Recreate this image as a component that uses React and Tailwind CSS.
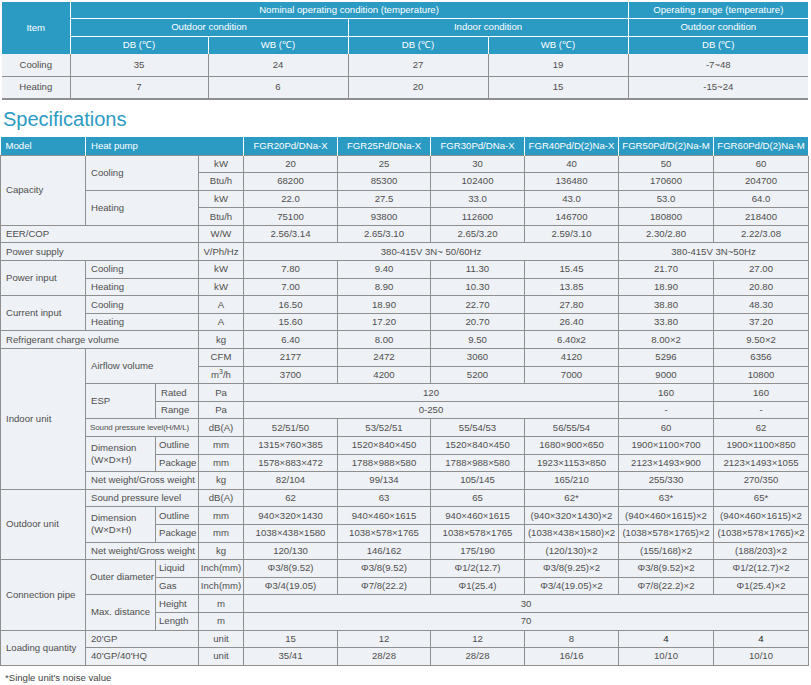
import React from "react";

const Td = ({ children, className = "", ...p }) => (
  <td className={`border border-[#8f8f8f] p-0 whitespace-nowrap ${className}`} {...p}>
    {children}
  </td>
);
const L = ({ children, className = "", ...p }) => (
  <Td className={`text-left pl-[5px] ${className}`} {...p}>
    {children}
  </Td>
);
const C = ({ children, className = "", ...p }) => (
  <Td className={`text-center ${className}`} {...p}>
    {children}
  </Td>
);
const Vals = ({ v }) => v.map((x, i) => <C key={i}>{x}</C>);

const models = [
  "FGR20Pd/DNa-X",
  "FGR25Pd/DNa-X",
  "FGR30Pd/DNa-X",
  "FGR40Pd/D(2)Na-X",
  "FGR50Pd/D(2)Na-M",
  "FGR60Pd/D(2)Na-M",
];

const Row = ({ children }) => <tr className="h-[17.6px]">{children}</tr>;

export default function App() {
  return (
    <div className="w-[811px] h-[685px] bg-white font-['Liberation_Sans',Arial,sans-serif] text-[9.6px] leading-[12px] text-[#4f4f4f] overflow-hidden">
      {/* Top table */}
      <table className="mt-[2px] ml-[2px] w-[806px] table-fixed border-collapse">
        <colgroup>
          <col className="w-[68px]" />
          <col className="w-[138px]" />
          <col className="w-[140px]" />
          <col className="w-[140px]" />
          <col className="w-[140px]" />
          <col className="w-[180px]" />
        </colgroup>
        <thead className="bg-[#2b9bc4] text-white">
          <tr className="h-[16px]">
            <th rowSpan={3} className="font-normal border-r border-white p-0">Item</th>
            <th colSpan={4} className="font-normal border-r border-b border-white p-0">
              Nominal operating condition (temperature)
            </th>
            <th className="font-normal border-b border-white p-0">Operating range (temperature)</th>
          </tr>
          <tr className="h-[18px]">
            <th colSpan={2} className="font-normal border-r border-b border-white p-0">Outdoor condition</th>
            <th colSpan={2} className="font-normal border-r border-b border-white p-0">Indoor condition</th>
            <th className="font-normal border-b border-white p-0">Outdoor condition</th>
          </tr>
          <tr className="h-[18px]">
            <th className="font-normal border-r border-white p-0">DB (℃)</th>
            <th className="font-normal border-r border-white p-0">WB (℃)</th>
            <th className="font-normal border-r border-white p-0">DB (℃)</th>
            <th className="font-normal border-r border-white p-0">WB (℃)</th>
            <th className="font-normal p-0">DB (℃)</th>
          </tr>
        </thead>
        <tbody className="bg-[#eef1f5]">
          <tr className="h-[22px]">
            <td className="text-center border-r border-b border-[#8f8f8f]">Cooling</td>
            <td className="text-center border-r border-b border-[#8f8f8f]">35</td>
            <td className="text-center border-r border-b border-[#8f8f8f]">24</td>
            <td className="text-center border-r border-b border-[#8f8f8f]">27</td>
            <td className="text-center border-r border-b border-[#8f8f8f]">19</td>
            <td className="text-center border-b border-[#8f8f8f]">-7~48</td>
          </tr>
          <tr className="h-[23px]">
            <td className="text-center border-r border-b-2 border-[#8f8f8f]">Heating</td>
            <td className="text-center border-r border-b-2 border-[#8f8f8f]">7</td>
            <td className="text-center border-r border-b-2 border-[#8f8f8f]">6</td>
            <td className="text-center border-r border-b-2 border-[#8f8f8f]">20</td>
            <td className="text-center border-r border-b-2 border-[#8f8f8f]">15</td>
            <td className="text-center border-b-2 border-[#8f8f8f]">-15~24</td>
          </tr>
        </tbody>
      </table>

      <div className="h-[37px] flex items-center pl-[3px] text-[20px] text-[#2b9bc4] leading-none">
        Specifications
      </div>

      {/* Spec table */}
      <table className="w-[808px] table-fixed border-collapse">
        <colgroup>
          <col className="w-[85px]" />
          <col className="w-[70px]" />
          <col className="w-[43px]" />
          <col className="w-[45px]" />
          <col className="w-[94px]" />
          <col className="w-[93px]" />
          <col className="w-[94px]" />
          <col className="w-[94px]" />
          <col className="w-[95px]" />
          <col className="w-[95px]" />
        </colgroup>
        <thead className="bg-[#2b9bc4] text-white">
          <tr className="h-[18px]">
            <th className="font-normal text-left pl-[5px] border-r border-white p-0">Model</th>
            <th colSpan={3} className="font-normal text-left pl-[5px] border-r border-white p-0">Heat pump</th>
            {models.map((m, i) => (
              <th key={i} className="font-normal text-center border-r border-white p-0 whitespace-nowrap">
                {m}
              </th>
            ))}
          </tr>
        </thead>
        <tbody className="bg-[#eef1f5]">
          <Row>
            <L rowSpan={4}>Capacity</L>
            <L colSpan={2} rowSpan={2}>Cooling</L>
            <C>kW</C>
            <Vals v={["20", "25", "30", "40", "50", "60"]} />
          </Row>
          <Row>
            <C>Btu/h</C>
            <Vals v={["68200", "85300", "102400", "136480", "170600", "204700"]} />
          </Row>
          <Row>
            <L colSpan={2} rowSpan={2}>Heating</L>
            <C>kW</C>
            <Vals v={["22.0", "27.5", "33.0", "43.0", "53.0", "64.0"]} />
          </Row>
          <Row>
            <C>Btu/h</C>
            <Vals v={["75100", "93800", "112600", "146700", "180800", "218400"]} />
          </Row>
          <Row>
            <L colSpan={3}>EER/COP</L>
            <C>W/W</C>
            <Vals v={["2.56/3.14", "2.65/3.10", "2.65/3.20", "2.59/3.10", "2.30/2.80", "2.22/3.08"]} />
          </Row>
          <Row>
            <L colSpan={3}>Power supply</L>
            <C>V/Ph/Hz</C>
            <C colSpan={4}>380-415V 3N~ 50/60Hz</C>
            <C colSpan={2}>380-415V 3N~50Hz</C>
          </Row>
          <Row>
            <L rowSpan={2}>Power input</L>
            <L colSpan={2}>Cooling</L>
            <C>kW</C>
            <Vals v={["7.80", "9.40", "11.30", "15.45", "21.70", "27.00"]} />
          </Row>
          <Row>
            <L colSpan={2}>Heating</L>
            <C>kW</C>
            <Vals v={["7.00", "8.90", "10.30", "13.85", "18.90", "20.80"]} />
          </Row>
          <Row>
            <L rowSpan={2}>Current input</L>
            <L colSpan={2}>Cooling</L>
            <C>A</C>
            <Vals v={["16.50", "18.90", "22.70", "27.80", "38.80", "48.30"]} />
          </Row>
          <Row>
            <L colSpan={2}>Heating</L>
            <C>A</C>
            <Vals v={["15.60", "17.20", "20.70", "26.40", "33.80", "37.20"]} />
          </Row>
          <Row>
            <L colSpan={3}>Refrigerant charge volume</L>
            <C>kg</C>
            <Vals v={["6.40", "8.00", "9.50", "6.40x2", "8.00×2", "9.50×2"]} />
          </Row>
          <Row>
            <L rowSpan={8}>Indoor unit</L>
            <L colSpan={2} rowSpan={2}>Airflow volume</L>
            <C>CFM</C>
            <Vals v={["2177", "2472", "3060", "4120", "5296", "6356"]} />
          </Row>
          <Row>
            <C>
              m<sup className="text-[7px]">3</sup>/h
            </C>
            <Vals v={["3700", "4200", "5200", "7000", "9000", "10800"]} />
          </Row>
          <Row>
            <L rowSpan={2}>ESP</L>
            <L>Rated</L>
            <C>Pa</C>
            <C colSpan={4}>120</C>
            <C>160</C>
            <C>160</C>
          </Row>
          <Row>
            <L>Range</L>
            <C>Pa</C>
            <C colSpan={4}>0-250</C>
            <C>-</C>
            <C>-</C>
          </Row>
          <Row>
            <L colSpan={2} className="text-[8px] !pl-[4px] tracking-[-0.1px]">Sound pressure level(H/M/L)</L>
            <C>dB(A)</C>
            <Vals v={["52/51/50", "53/52/51", "55/54/53", "56/55/54", "60", "62"]} />
          </Row>
          <Row>
            <L rowSpan={2}>
              Dimension
              <br />
              (W×D×H)
            </L>
            <L className="!pl-[3px]">Outline</L>
            <C>mm</C>
            <Vals v={["1315×760×385", "1520×840×450", "1520×840×450", "1680×900×650", "1900×1100×700", "1900×1100×850"]} />
          </Row>
          <Row>
            <L className="!pl-[3px]">Package</L>
            <C>mm</C>
            <Vals v={["1578×883×472", "1788×988×580", "1788×988×580", "1923×1153×850", "2123×1493×900", "2123×1493×1055"]} />
          </Row>
          <Row>
            <L colSpan={2}>Net weight/Gross weight</L>
            <C>kg</C>
            <Vals v={["82/104", "99/134", "105/145", "165/210", "255/330", "270/350"]} />
          </Row>
          <Row>
            <L rowSpan={4}>Outdoor unit</L>
            <L colSpan={2}>Sound pressure level</L>
            <C>dB(A)</C>
            <Vals v={["62", "63", "65", "62*", "63*", "65*"]} />
          </Row>
          <Row>
            <L rowSpan={2}>
              Dimension
              <br />
              (W×D×H)
            </L>
            <L className="!pl-[3px]">Outline</L>
            <C>mm</C>
            <Vals v={["940×320×1430", "940×460×1615", "940×460×1615", "(940×320×1430)×2", "(940×460×1615)×2", "(940×460×1615)×2"]} />
          </Row>
          <Row>
            <L className="!pl-[3px]">Package</L>
            <C>mm</C>
            <Vals v={["1038×438×1580", "1038×578×1765", "1038×578×1765", "(1038×438×1580)×2", "(1038×578×1765)×2", "(1038×578×1765)×2"]} />
          </Row>
          <Row>
            <L colSpan={2}>Net weight/Gross weight</L>
            <C>kg</C>
            <Vals v={["120/130", "146/162", "175/190", "(120/130)×2", "(155/168)×2", "(188/203)×2"]} />
          </Row>
          <Row>
            <L rowSpan={4}>Connection pipe</L>
            <L rowSpan={2} className="!pl-[4px]">Outer diameter</L>
            <L className="!pl-[3px]">Liquid</L>
            <C>Inch(mm)</C>
            <Vals v={["Φ3/8(9.52)", "Φ3/8(9.52)", "Φ1/2(12.7)", "Φ3/8(9.25)×2", "Φ3/8(9.52)×2", "Φ1/2(12.7)×2"]} />
          </Row>
          <Row>
            <L className="!pl-[3px]">Gas</L>
            <C>Inch(mm)</C>
            <Vals v={["Φ3/4(19.05)", "Φ7/8(22.2)", "Φ1(25.4)", "Φ3/4(19.05)×2", "Φ7/8(22.2)×2", "Φ1(25.4)×2"]} />
          </Row>
          <Row>
            <L rowSpan={2}>Max. distance</L>
            <L className="!pl-[3px]">Height</L>
            <C>m</C>
            <C colSpan={6}>30</C>
          </Row>
          <Row>
            <L className="!pl-[3px]">Length</L>
            <C>m</C>
            <C colSpan={6}>70</C>
          </Row>
          <Row>
            <L rowSpan={2}>Loading quantity</L>
            <L colSpan={2}>20'GP</L>
            <C>unit</C>
            <C>15</C>
            <C>12</C>
            <C>12</C>
            <C>8</C>
            <C className="text-[#222]">4</C>
            <C className="text-[#222]">4</C>
          </Row>
          <Row>
            <L colSpan={2}>40'GP/40'HQ</L>
            <C>unit</C>
            <Vals v={["35/41", "28/28", "28/28", "16/16", "10/10", "10/10"]} />
          </Row>
        </tbody>
      </table>

      <div className="h-[24px] flex items-center pl-[5px] text-[#444]">*Single unit's noise value</div>
    </div>
  );
}
